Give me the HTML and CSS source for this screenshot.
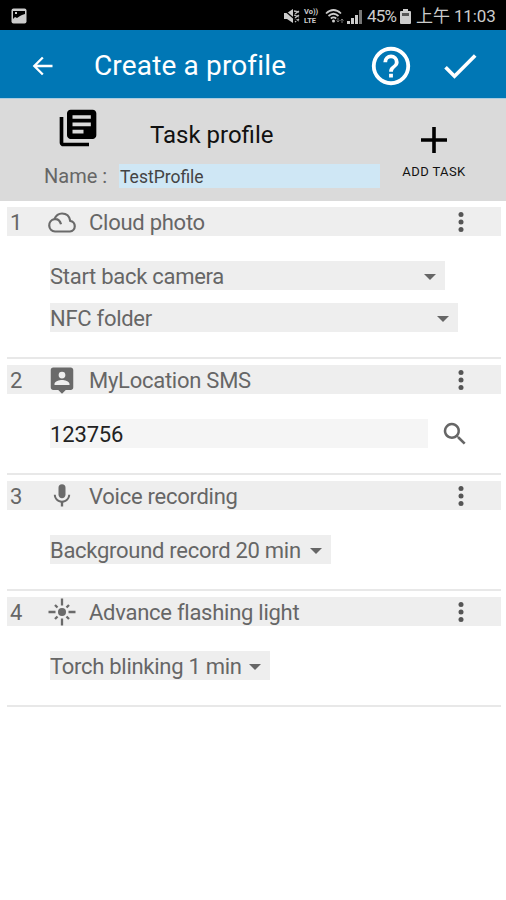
FILE: index.html
```html
<!DOCTYPE html>
<html lang="en">
<head>
    <meta charset="UTF-8">
    <title>Create a profile</title>
    <link rel="stylesheet" href="styles.css">
</head>
<body>
    <div class="status">
        <svg class="picture" width="16" height="16" viewBox="0 0 16 16"><rect x="0.500" y="0.500" width="15" height="15" rx="2" fill="#ccc"/><path d="M2 3h12v3l-3 1-2 1-3 2-2-1-2 2z" fill="#000"/><path d="M4 4h2v2H4z" fill="#ccc"/></svg>
        <svg class="mute" width="17" height="16" viewBox="0 0 17 16"><path d="M1 5h3l6-4v14l-6-4H1z" fill="#ccc"/><path d="M11 3l5 1M11 7l5 2M11 11l5 2M12 6l4-3M12 10l4-3M12 14l4-3" stroke="#bbb" stroke-width="1.300"/><path d="M1 2l14 12" stroke="#000" stroke-width="1.200"/></svg>
        <span class="volte"><span>Vo))</span><span>LTE</span></span>
        <svg class="wifi" width="19" height="16" viewBox="0 0 19 16"><g fill="none" stroke="#ccc" stroke-width="1.700"><path d="M1 5.500q7.500-7 15 0M3.500 8q5-4.500 10 0M5.800 10.500q2.700-2.300 5.400 0"/></g><circle cx="8.500" cy="13" r="1.500" fill="#ccc"/><path d="M13 10v4M11.500 12.500l1.500 1.500 1.500-1.500M17 15v-4M15.500 12.500l1.500-1.500 1.500 1.500" fill="none" stroke="#777"/></svg>
        <svg class="signal" width="15" height="15" viewBox="0 0 15 15"><path d="M0 12h3v3H0zM4 9h3v6H4zM8 6h3v9H8z" fill="#ccc"/><path d="M12 1h3v14h-3z" fill="#777"/></svg>
        <span class="percent">45%</span>
        <svg class="battery" width="11" height="15" viewBox="0 0 11 15"><path d="M3 0h5v2h2q1 0 1 1v11q0 1-1 1H1q-1 0-1-1V3q0-1 1-1h2z" fill="#ccc"/><path d="M2 4h7v3H2z" fill="#555"/></svg>
        <span class="clock">上午 11:03</span>
    </div>
    <div class="bar">
        <svg class="back" width="28" height="28" viewBox="0 0 24 24"><path d="M21 11H7.830l5.590-5.590L12 4l-8 8 8 8 1.410-1.410L7.830 13H21z" fill="#fff"/></svg>
        <h1>Create a profile</h1>
        <svg class="help" width="46" height="46" viewBox="0 0 24 24"><path d="M11 18h2v-2h-2zm1-16a10 10 0 1 0 0 20 10 10 0 0 0 0-20zm0 18a8 8 0 1 1 0-16 8 8 0 0 1 0 16zm0-14a4 4 0 0 0-4 4h2a2 2 0 0 1 4 0c0 2-3 1.750-3 5h2c0-2.250 3-2.500 3-5a4 4 0 0 0-4-4z" fill="#fff"/></svg>
        <svg class="done" width="44" height="44" viewBox="0 0 24 24"><path d="M9 16.170L4.830 12l-1.420 1.410L9 19 21 7l-1.410-1.410z" fill="#fff"/></svg>
    </div>
    <div class="profile">
        <div class="info">
            <div class="title">
                <svg width="44" height="44" viewBox="0 0 24 24"><path d="M4 6H2v14c0 1.100.9 2 2 2h14v-2H4zm16-4H8c-1.100 0-2 .9-2 2v12c0 1.100.9 2 2 2h12c1.100 0 2-.9 2-2V4c0-1.100-.9-2-2-2zm-1 9H9V9h10zm-4 4H9v-2h6zm4-8H9V5h10z"/></svg>
                <h2>Task profile</h2>
            </div>
            <div class="name">
                <span class="label">Name :</span>
                <span class="value">TestProfile</span>
            </div>
        </div>
        <div class="add">
            <svg width="26" height="26" viewBox="0 0 26 26"><path d="M13 0v26M0 13h26" stroke="#000" stroke-width="3.600"/></svg>
            <span>ADD TASK</span>
        </div>
    </div>
    <div class="tasks">
        <div class="task">
            <div class="head">
                <span class="num">1</span>
                <svg class="icon cloud" width="30" height="30" viewBox="0 0 30 30"><path d="M8 24.500a6.200 6.200 0 0 1-.6-12.300C9 8.500 11.500 6.500 15 6.500c4.500 0 7.500 3 8.200 7.300a5.400 5.400 0 0 1-.2 10.700zM7.400 12.200c3.600-.5 5.600 1.500 6.600 5"/></svg>
                <h3>Cloud photo</h3>
                <svg class="more" width="8" height="22" viewBox="0 0 8 22"><circle cx="4" cy="3.500" r="2.500"/><circle cx="4" cy="11" r="2.500"/><circle cx="4" cy="18.500" r="2.500"/></svg>
            </div>
            <div class="body">
                <div class="select camera">Start back camera<i></i></div>
                <div class="select folder">NFC folder<i></i></div>
            </div>
        </div>
        <div class="task">
            <div class="head">
                <span class="num">2</span>
                <svg class="icon" width="30" height="30" viewBox="0 0 24 24"><path d="M19 2H5a2 2 0 0 0-2 2v14c0 1.100.9 2 2 2h4l3 3 3-3h4c1.100 0 2-.9 2-2V4c0-1.100-.9-2-2-2zm-7 3.300a2.700 2.700 0 1 1 0 5.400 2.700 2.700 0 0 1 0-5.400zM18 16H6v-.9c0-2 4-3.100 6-3.100s6 1.100 6 3.100z"/></svg>
                <h3>MyLocation SMS</h3>
                <svg class="more" width="8" height="22" viewBox="0 0 8 22"><circle cx="4" cy="3.500" r="2.500"/><circle cx="4" cy="11" r="2.500"/><circle cx="4" cy="18.500" r="2.500"/></svg>
            </div>
            <div class="body search">
                <div class="input">123756</div>
                <svg width="30" height="30" viewBox="0 0 24 24"><path d="M15.500 14h-.79l-.28-.27A6.500 6.500 0 1 0 13.730 14.430l.27.28v.79l5 4.990L20.490 19zm-6 0a4.500 4.500 0 1 1 0-9 4.500 4.500 0 0 1 0 9z"/></svg>
            </div>
        </div>
        <div class="task">
            <div class="head">
                <span class="num">3</span>
                <svg class="icon mic" width="30" height="28" viewBox="0 0 24 24"><path d="M12 14c1.660 0 3-1.340 3-3V5a3 3 0 0 0-6 0v6c0 1.660 1.340 3 3 3zm5.300-3c0 3-2.540 5.100-5.300 5.100S6.700 14 6.700 11H5c0 3.410 2.720 6.230 6 6.720V21h2v-3.280c3.280-.48 6-3.300 6-6.720z"/></svg>
                <h3>Voice recording</h3>
                <svg class="more" width="8" height="22" viewBox="0 0 8 22"><circle cx="4" cy="3.500" r="2.500"/><circle cx="4" cy="11" r="2.500"/><circle cx="4" cy="18.500" r="2.500"/></svg>
            </div>
            <div class="body">
                <div class="select record">Background record 20 min<i></i></div>
            </div>
        </div>
        <div class="task">
            <div class="head">
                <span class="num">4</span>
                <svg class="icon" width="30" height="28" viewBox="0 0 28 28"><circle cx="14" cy="14" r="4"/><path d="M14 0.500v7M14 20.500v7M0.500 14h7M20.500 14h7M7 7l2.500 2.500M18.500 18.500L21 21M21 7l-2.500 2.500M9.500 18.500L7 21" stroke="#6a6a6a" stroke-width="2.300"/></svg>
                <h3>Advance flashing light</h3>
                <svg class="more" width="8" height="22" viewBox="0 0 8 22"><circle cx="4" cy="3.500" r="2.500"/><circle cx="4" cy="11" r="2.500"/><circle cx="4" cy="18.500" r="2.500"/></svg>
            </div>
            <div class="body">
                <div class="select torch">Torch blinking 1 min<i></i></div>
            </div>
        </div>
    </div>
</body>
</html>
```
FILE: styles.css
```css
*{
    padding: 0;
    margin: 0;
    box-sizing: border-box;
}
body{
    width: 506px;
    height: 900px;
    background: #fff;
    font-family: Roboto, "Noto Sans CJK TC", sans-serif;
    color: #666;
    overflow: hidden;
}
h1,h2,h3{
    font-weight: 400;
    white-space: nowrap;
}
svg{
    display: block;
    flex: none;
}
.status{
    height: 30px;
    padding: 2px 11px 0 11px;
    background: #000;
    color: #ccc;
    display: flex;
    align-items: center;
    white-space: nowrap;
}
.mute{
    margin-left: auto;
}
.volte{
    width: 16px;
    margin-left: 4px;
    font-size: 7.5px;
    line-height: 9px;
    font-weight: 700;
    display: flex;
    flex-direction: column;
}
.wifi{
    margin-left: 5px;
}
.signal{
    margin-left: 3px;
}
.percent{
    width: 30px;
    margin-left: 5px;
    font-size: 17px;
    letter-spacing: -0.8px;
}
.battery{
    margin-left: 3px;
}
.clock{
    width: 79px;
    margin-left: 5px;
    font-size: 17px;
    line-height: 20px;
    letter-spacing: -0.1px;
}
.bar{
    height: 69px;
    padding: 3px 24px 0 28px;
    background: #0077b5;
    border-bottom: 1px solid #a9cce0;
    color: #fff;
    display: flex;
    align-items: center;
}
.bar h1{
    margin-left: 38px;
    font-size: 28px;
    letter-spacing: 0.15px;
}
.help{
    margin-left: auto;
}
.done{
    margin-left: 24px;
}
.profile{
    height: 102px;
    background: #dadada;
    color: #111;
    display: flex;
}
.info{
    width: 380px;
    padding: 7px 0 0 44px;
}
.title{
    padding-left: 12px;
    display: flex;
}
.title h2{
    margin: 14px 0 0 50px;
    font-size: 24px;
    line-height: 30px;
}
.name{
    margin-top: 14px;
    display: flex;
    align-items: flex-start;
}
.label{
    width: 75px;
    font-size: 20px;
    line-height: 25px;
    color: #666;
}
.value{
    width: 261px;
    height: 24px;
    padding-left: 1px;
    background: #cfe7f5;
    font-size: 17.5px;
    line-height: 26px;
    color: #444;
}
.add{
    width: 108px;
    padding-top: 28px;
    font-size: 13px;
    letter-spacing: 0.4px;
    display: flex;
    flex-direction: column;
    align-items: center;
}
.add span{
    margin-top: 11px;
    line-height: 16px;
}
.tasks{
    padding: 6px 5px 0 7px;
}
.task{
    margin-bottom: 6px;
    border-bottom: 2px solid #e8e8e8;
}
.head{
    height: 29px;
    padding: 0 36px 0 3px;
    background: #eee;
    display: flex;
    align-items: center;
    font-size: 22px;
    line-height: 31px;
}
.head svg{
    fill: #6a6a6a;
}
.head .cloud{
    fill: none;
    stroke: #6a6a6a;
    stroke-width: 2.2px;
}
.num{
    width: 37px;
    padding-top: 1px;
}
.icon{
    width: 30px;
}
.head h3{
    margin-left: 12px;
    padding-top: 1px;
    font-size: 22px;
    letter-spacing: -0.26px;
}
.head .more{
    margin-left: auto;
    fill: #555;
}
.body{
    padding: 25px 0 25px 43px;
    display: flex;
    flex-direction: column;
    gap: 13px;
}
.select,.input{
    height: 29px;
    background: #eee;
    font-size: 22px;
    line-height: 31px;
    white-space: nowrap;
}
.select{
    padding: 2px 9px 0 0;
    letter-spacing: -0.28px;
    display: flex;
    align-items: center;
    justify-content: space-between;
}
.select i{
    border: 6px solid transparent;
    border-top-color: #666;
    border-bottom: 0;
}
.camera{
    width: 395px;
}
.folder{
    width: 408px;
}
.record{
    width: 281px;
}
.torch{
    width: 220px;
}
.search{
    flex-direction: row;
    align-items: center;
    height: 79px;
}
.search svg{
    margin-left: -1px;
    fill: #666;
}
.input{
    width: 378px;
    background: #f5f5f5;
    color: #222;
    letter-spacing: -0.15px;
}
.search{
    gap: 13px;
}
```
